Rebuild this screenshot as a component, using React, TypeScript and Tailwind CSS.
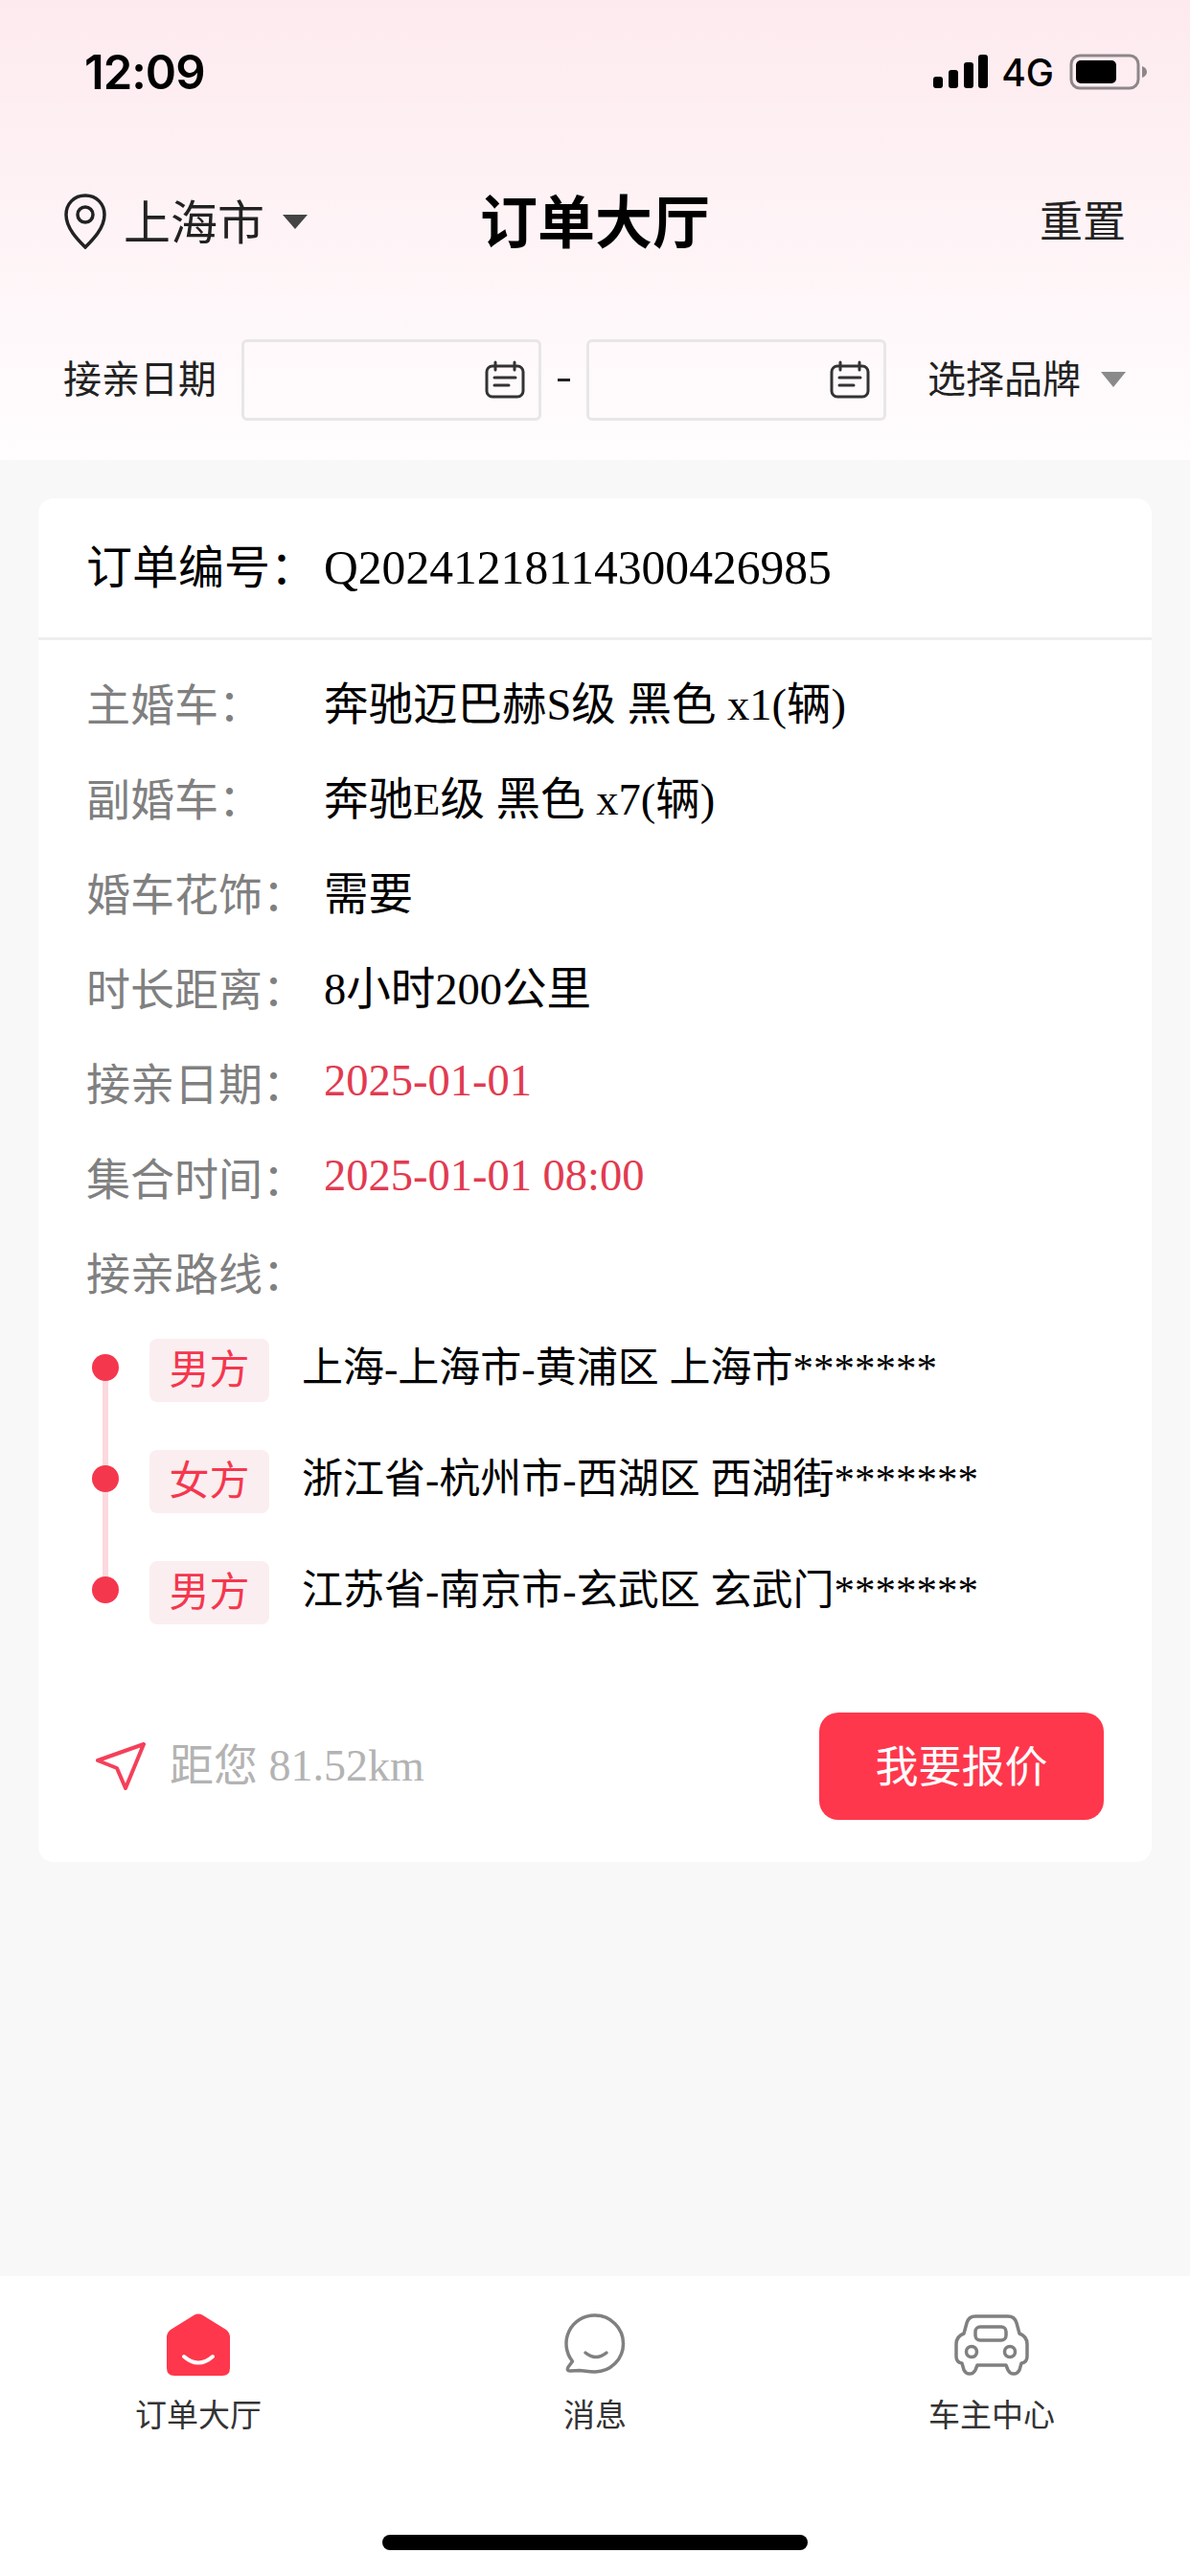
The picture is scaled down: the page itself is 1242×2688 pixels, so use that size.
const infoRows = [
  { label: '主婚车：', value: '奔驰迈巴赫S级 黑色 x1(辆)' },
  { label: '副婚车：', value: '奔驰E级 黑色 x7(辆)' },
  { label: '婚车花饰：', value: '需要' },
  { label: '时长距离：', value: '8小时200公里' },
  { label: '接亲日期：', value: '2025-01-01', red: true },
  { label: '集合时间：', value: '2025-01-01 08:00', red: true },
  { label: '接亲路线：', value: '' },
];

const routes = [
  { side: '男方', address: '上海-上海市-黄浦区 上海市*******' },
  { side: '女方', address: '浙江省-杭州市-西湖区 西湖街*******' },
  { side: '男方', address: '江苏省-南京市-玄武区 玄武门*******' },
];

function CalendarIcon() {
  return (
    <svg width="42" height="40" viewBox="0 0 42 40" fill="none" stroke="#333" strokeWidth="3" strokeLinecap="round">
      <rect x="2" y="6" width="38" height="32" rx="6" />
      <path d="M11 2v8M31 2v8M10 18h22M10 26h15" />
    </svg>
  );
}

function DateInput() {
  return (
    <div className="flex h-[85px] w-[313px] items-center justify-end rounded-[6px] border-[3px] border-[#e8e6e7] pr-[14px]">
      <CalendarIcon />
    </div>
  );
}

function TabHomeIcon() {
  return (
    <svg width="66" height="66" viewBox="0 0 66 66">
      <path d="M29 1.5 Q33 -0.5 37 1.5 L62 17 Q66 20 66 25 V57 Q66 65 58 65 H8 Q0 65 0 57 V25 Q0 20 4 17 Z" fill="#ff374c" />
      <path d="M18 45 Q33 58 48 45" fill="none" stroke="#fff" strokeWidth="4" strokeLinecap="round" />
    </svg>
  );
}

function TabMessageIcon() {
  return (
    <svg width="66" height="66" viewBox="0 0 66 66" fill="none" stroke="#808080" strokeWidth="3.5" strokeLinecap="round" strokeLinejoin="round">
      <path d="M33 2 A29.5 29.5 0 0 1 33 61 C27 61 22 60 17 59.5 L7 60 Q3 60 5 56 L9.5 50 A29.5 29.5 0 0 1 33 2 Z" />
      <path d="M23 41 Q34 50 45 41" />
    </svg>
  );
}

function TabCarIcon() {
  return (
    <svg width="78" height="66" viewBox="0 0 78 64" fill="none" stroke="#808080" strokeWidth="3.5" strokeLinejoin="round">
      <path d="M22 2 H56 Q63 2 65 9 L68 20 Q76 23 76 31 V44 Q76 50 70 51 L68 58 Q66 62 62 62 Q58 62 56 58 L54 53 H24 L22 58 Q20 62 16 62 Q12 62 10 58 L8 51 Q2 50 2 44 V31 Q2 23 10 20 L13 9 Q15 2 22 2 Z" />
      <rect x="22" y="13" width="32" height="14" rx="5" />
      <circle cx="18" cy="39" r="5.5" />
      <circle cx="58" cy="39" r="5.5" />
    </svg>
  );
}

export default function App() {
  return (
    <div className="flex h-[2688px] w-[1242px] flex-col bg-[#f8f8f8] font-['Noto_Sans_CJK_SC',sans-serif] text-black">
      <header className="h-[480px] shrink-0 bg-gradient-to-b from-[#fdeaee] to-[#fffdfe]">
        {/* status bar */}
        <div className="flex h-[150px] items-center justify-between pl-[88px] pr-[44px]">
          <span className="font-['Inter',sans-serif] text-[49px] font-semibold leading-none tracking-[-1px]">12:09</span>
          <div className="flex items-center">
            <svg width="58" height="36" viewBox="0 0 58 36" fill="#000">
              <rect x="0" y="23" width="10" height="12" rx="3" />
              <rect x="16" y="16" width="10" height="19" rx="3" />
              <rect x="32" y="8" width="10" height="27" rx="3" />
              <rect x="47" y="0" width="10" height="35" rx="3" />
            </svg>
            <span className="ml-[13px] font-['Inter',sans-serif] text-[39px] font-medium leading-none">4G</span>
            <svg className="ml-[16px]" width="82" height="38" viewBox="0 0 82 38">
              <rect x="2" y="2" width="70" height="34" rx="9" fill="none" stroke="#8e8689" strokeWidth="3" />
              <rect x="7" y="7" width="42" height="24" rx="5" fill="#000" />
              <path d="M76 13 Q81 15 81 19 Q81 23 76 25 Z" fill="#8e8689" />
            </svg>
          </div>
        </div>

        {/* nav */}
        <div className="grid h-[162px] grid-cols-3 items-center px-[67px]">
          <div className="flex items-center">
            <svg width="44" height="58" viewBox="0 0 44 58" fill="none" stroke="#222" strokeWidth="3.5">
              <path d="M22 2 C10 2 2 11 2 22 C2 36 14 48 22 56 C30 48 42 36 42 22 C42 11 34 2 22 2 Z" />
              <circle cx="22" cy="22" r="8" />
            </svg>
            <span className="ml-[18px] -translate-y-[3px] text-[49px] leading-none text-[#222]">上海市</span>
            <span className="ml-[19px] h-0 w-0 border-x-[13px] border-t-[15px] border-x-transparent border-t-[#444]" />
          </div>
          <h1 className="-translate-y-[3px] text-center text-[60px] font-bold leading-none whitespace-nowrap">订单大厅</h1>
          <div className="-translate-y-[3px] text-right text-[45px] leading-none text-[#222]">重置</div>
        </div>

        {/* filter */}
        <div className="flex h-[168px] items-center pl-[66px]">
          <span className="w-[186px] -translate-y-[3px] text-[40px] leading-none text-[#222]">接亲日期</span>
          <DateInput />
          <span className="mx-[17px] h-[3px] w-[13px] bg-[#222]" />
          <DateInput />
          <span className="ml-[43px] -translate-y-[3px] text-[40px] leading-none text-[#222]">选择品牌</span>
          <span className="ml-[21px] h-0 w-0 border-x-[13px] border-t-[16px] border-x-transparent border-t-[#8a8a8a]" />
        </div>
      </header>

      <main className="flex-1 px-[40px] pt-[40px]">
        <section className="h-[1423px] rounded-[16px] bg-white font-['Liberation_Serif','Noto_Sans_CJK_SC',serif]">
          <div className="flex h-[148px] items-center border-b-[3px] border-[#eeeeee] pl-[50px]">
            <span className="w-[248px] text-[48px] leading-none">订单编号：</span>
            <span className="text-[49.6px] leading-none">Q20241218114300426985</span>
          </div>

          <div className="pt-[19px]">
            {infoRows.map((row) => (
              <div key={row.label} className="flex h-[99px] items-center pl-[50px] text-[46.5px] leading-none">
                <span className="w-[248px] text-[46px] text-[#808080]">{row.label}</span>
                <span className={row.red ? '-translate-y-[4px] text-[#e23a50]' : 'text-black'}>{row.value}</span>
              </div>
            ))}
          </div>

          <div className="mt-[-11px] pl-[56px]">
            {routes.map((route, i) => (
              <div key={i} className="relative flex h-[116px] items-center">
                {i < routes.length - 1 && (
                  <span className="absolute left-[11px] top-[58px] h-[116px] w-[6px] bg-[#fbd9de]" />
                )}
                <span className="relative h-[28px] w-[28px] shrink-0 rounded-full bg-[#f5374e]" />
                <span className="ml-[32px] flex h-[66px] w-[125px] shrink-0 translate-y-[3px] items-center justify-center rounded-[8px] bg-[#fbeef0] text-[42px] leading-none text-[#f5374e]">
                  {route.side}
                </span>
                <span className="ml-[34px] text-[43px] leading-none">{route.address}</span>
              </div>
            ))}
          </div>

          <div className="mt-[70px] flex items-center justify-between pl-[60px] pr-[50px]">
            <div className="flex items-center">
              <svg width="52" height="50" viewBox="0 0 52 50" fill="none" stroke="#f5405a" strokeWidth="4" strokeLinejoin="round">
                <path d="M50 2 L2 19 L22 27 L31 48 Z" />
              </svg>
              <span className="ml-[25px] text-[46px] leading-none text-[#b3b3b3]">距您 81.52km</span>
            </div>
            <button className="flex h-[112px] w-[297px] items-center justify-center rounded-[20px] bg-[#ff374c] font-['Noto_Sans_CJK_SC',sans-serif] text-[45px] leading-none text-white">
              <span className="-translate-y-[3px]">我要报价</span>
            </button>
          </div>
        </section>
      </main>

      <nav className="flex h-[313px] shrink-0 flex-col bg-white">
        <div className="grid grid-cols-3 pt-[39px]">
          <div className="flex flex-col items-center">
            <TabHomeIcon />
            <span className="mt-[22px] text-[33px] leading-none text-[#333]">订单大厅</span>
          </div>
          <div className="flex flex-col items-center">
            <TabMessageIcon />
            <span className="mt-[22px] text-[33px] leading-none text-[#333]">消息</span>
          </div>
          <div className="flex flex-col items-center">
            <TabCarIcon />
            <span className="mt-[22px] text-[33px] leading-none text-[#333]">车主中心</span>
          </div>
        </div>
        <div className="mx-auto mt-[110px] h-[16px] w-[444px] rounded-full bg-black" />
      </nav>
    </div>
  );
}
